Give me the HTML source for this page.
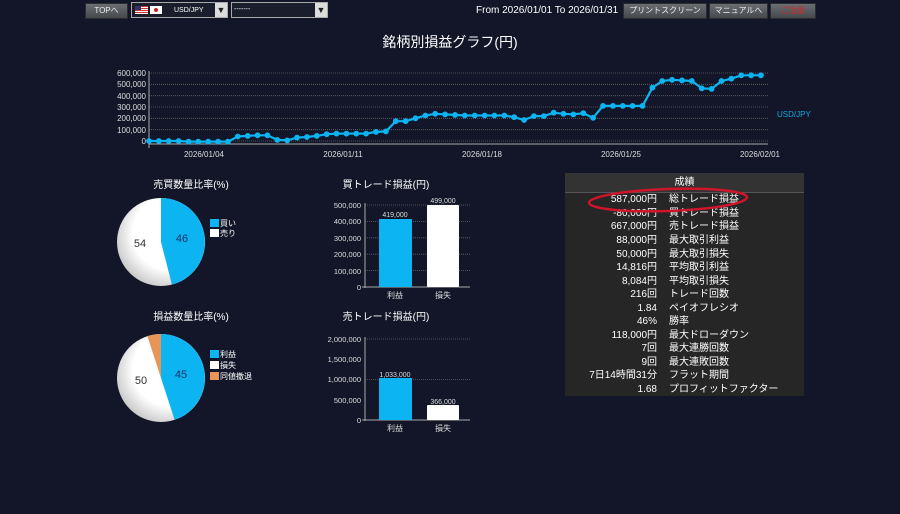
<!DOCTYPE html><html><head><meta charset="utf-8"><style>
body{margin:0;width:900px;height:514px;background:#121628;overflow:hidden;font-family:"Liberation Sans","Noto Sans CJK JP",sans-serif;color:#fff;position:relative}
.b{position:absolute;top:3px;height:14px;background:linear-gradient(#6a6d72,#45484d);border:1px solid #2a2c30;font-size:8px;line-height:14px;text-align:center;color:#eee}
.s{position:absolute;top:2px;height:14px;border:1px solid #aaa;background:#1a1e2c;font-size:7px;line-height:14px}
.s i{position:absolute;right:0;top:0;width:12px;height:14px;background:#ddd;color:#222;font-style:normal;text-align:center;font-size:9px}
table{position:absolute;left:565px;top:173px;width:239px;height:223px;background:#262626;border-collapse:collapse;font-size:10px}
td{padding:0;height:13.4px;line-height:13px}
td.v{text-align:right;width:92px;padding-right:4px}
td.l{padding-left:8px}
</style></head><body>
<div class="b" style="left:85px;width:41px">TOPへ</div>
<div class="s" style="left:131px;width:95px"><span style="position:absolute;left:3px;top:3px;width:13px;height:8px;background:repeating-linear-gradient(#c33 0 1px,#fff 1px 2px)"><span style="position:absolute;left:0;top:0;width:6px;height:4px;background:#336"></span></span><span style="position:absolute;left:18px;top:3px;width:12px;height:8px;background:#fff"><span style="position:absolute;left:4px;top:2px;width:4px;height:4px;border-radius:50%;background:#c22"></span></span><span style="position:absolute;left:42px;top:1px">USD/JPY</span><i>▼</i></div>
<div class="s" style="left:231px;width:95px"><span style="padding-left:2px">-------</span><i>▼</i></div>
<div style="position:absolute;left:476px;top:5px;font-size:10px">From 2026/01/01 To 2026/01/31</div>
<div class="b" style="left:623px;width:82px">プリントスクリーン</div>
<div class="b" style="left:709px;width:57px">マニュアルへ</div>
<div class="b" style="left:770px;width:44px;color:#d22">ご注意</div>
<div style="position:absolute;left:0;width:900px;top:32px;text-align:center;font-size:14px">銘柄別損益グラフ(円)</div>
<svg width="900" height="514" style="position:absolute;left:0;top:0" font-family="Liberation Sans,Noto Sans CJK JP,sans-serif">
<g stroke="#666" stroke-dasharray="1,1" stroke-width="0.8">
<line x1="149" x2="768" y1="73" y2="73"/><line x1="149" x2="768" y1="84.3" y2="84.3"/><line x1="149" x2="768" y1="95.7" y2="95.7"/><line x1="149" x2="768" y1="107" y2="107"/><line x1="149" x2="768" y1="118.3" y2="118.3"/><line x1="149" x2="768" y1="129.7" y2="129.7"/><line x1="149" x2="768" y1="141" y2="141"/>
</g>
<line x1="149" x2="149" y1="71" y2="148" stroke="#aaa"/><line x1="149" x2="768" y1="144" y2="144" stroke="#aaa"/>
<g fill="#ddd" font-size="8" text-anchor="end"><text x="146" y="76">600,000</text><text x="146" y="87">500,000</text><text x="146" y="99">400,000</text><text x="146" y="110">300,000</text><text x="146" y="121">200,000</text><text x="146" y="133">100,000</text><text x="146" y="144">0</text></g>
<g fill="#ddd" font-size="8" text-anchor="middle"><text x="204" y="157">2026/01/04</text><text x="343" y="157">2026/01/11</text><text x="482" y="157">2026/01/18</text><text x="621" y="157">2026/01/25</text><text x="760" y="157">2026/02/01</text></g>
<text x="777" y="117" fill="#1aa7e0" font-size="8">USD/JPY</text>
<g id="ln"></g>
<text x="191" y="188" fill="#fff" font-size="10" text-anchor="middle">売買数量比率(%)</text>
<defs><radialGradient id="wg" cx="0.6" cy="0.4" r="0.7"><stop offset="0.6" stop-color="#fff"/><stop offset="1" stop-color="#bbb"/></radialGradient></defs>
<circle cx="161" cy="242" r="44" fill="url(#wg)"/>
<path d="M161 242 L161 198 A44 44 0 0 1 171.9 284.6 Z" fill="#0db4f2"/>
<text x="182" y="242" fill="#136" font-size="11" text-anchor="middle">46</text><text x="140" y="247" fill="#333" font-size="11" text-anchor="middle">54</text>
<rect x="210" y="219" width="9" height="8" fill="#0db4f2"/><rect x="210" y="229" width="9" height="8" fill="#fff"/>
<text x="220" y="226" fill="#fff" font-size="8">買い</text><text x="220" y="236" fill="#fff" font-size="8">売り</text>
<text x="191" y="320" fill="#fff" font-size="10" text-anchor="middle">損益数量比率(%)</text>
<circle cx="161" cy="378" r="44" fill="url(#wg)"/>
<path d="M161 378 L161 334 A44 44 0 0 1 174.6 419.8 Z" fill="#0db4f2"/>
<path d="M161 378 L147.4 336.2 A44 44 0 0 1 161 334 Z" fill="#e8955a"/>
<text x="181" y="378" fill="#136" font-size="11" text-anchor="middle">45</text><text x="141" y="384" fill="#333" font-size="11" text-anchor="middle">50</text>
<rect x="210" y="350" width="9" height="8" fill="#0db4f2"/><rect x="210" y="361" width="9" height="8" fill="#fff"/><rect x="210" y="372" width="9" height="8" fill="#e8955a"/>
<text x="220" y="357" fill="#fff" font-size="8">利益</text><text x="220" y="368" fill="#fff" font-size="8">損失</text><text x="220" y="379" fill="#fff" font-size="8">同値撤退</text>
<text x="386" y="188" fill="#fff" font-size="10" text-anchor="middle">買トレード損益(円)</text>
<g stroke="#666" stroke-dasharray="1,1" stroke-width="0.8"><line x1="365" x2="470" y1="205" y2="205"/><line x1="365" x2="470" y1="221.4" y2="221.4"/><line x1="365" x2="470" y1="237.8" y2="237.8"/><line x1="365" x2="470" y1="254.2" y2="254.2"/><line x1="365" x2="470" y1="270.6" y2="270.6"/></g>
<line x1="365" x2="365" y1="203" y2="288" stroke="#aaa"/><line x1="362" x2="470" y1="287" y2="287" stroke="#aaa"/>
<g fill="#ddd" font-size="7.5" text-anchor="end"><text x="361" y="208">500,000</text><text x="361" y="224">400,000</text><text x="361" y="241">300,000</text><text x="361" y="257">200,000</text><text x="361" y="274">100,000</text><text x="361" y="290">0</text></g>
<rect x="379" y="219" width="33" height="68" fill="#0db4f2"/><rect x="427" y="205" width="32" height="82" rx="1" fill="#fff"/>
<g fill="#ddd" font-size="7" text-anchor="middle"><text x="395" y="217">419,000</text><text x="443" y="203">499,000</text></g>
<g fill="#ddd" font-size="8" text-anchor="middle"><text x="395" y="298">利益</text><text x="443" y="298">損失</text></g>
<text x="386" y="320" fill="#fff" font-size="10" text-anchor="middle">売トレード損益(円)</text>
<g stroke="#666" stroke-dasharray="1,1" stroke-width="0.8"><line x1="365" x2="470" y1="339" y2="339"/><line x1="365" x2="470" y1="379.5" y2="379.5"/></g>
<line x1="365" x2="365" y1="337" y2="421" stroke="#aaa"/><line x1="362" x2="470" y1="420" y2="420" stroke="#aaa"/>
<g fill="#ddd" font-size="7.5" text-anchor="end"><text x="361" y="342">2,000,000</text><text x="361" y="362">1,500,000</text><text x="361" y="382">1,000,000</text><text x="361" y="403">500,000</text><text x="361" y="423">0</text></g>
<rect x="379" y="378" width="33" height="42" fill="#0db4f2"/><rect x="427" y="405" width="32" height="15" rx="1" fill="#fff"/>
<g fill="#ddd" font-size="7" text-anchor="middle"><text x="395" y="377">1,033,000</text><text x="443" y="404">366,000</text></g>
<g fill="#ddd" font-size="8" text-anchor="middle"><text x="395" y="431">利益</text><text x="443" y="431">損失</text></g>
</svg>
<table>
<tr style="background:#333;border-bottom:1px solid #555"><td colspan="2" style="text-align:center;height:19px">成績</td></tr>
<tr><td class="v">587,000円</td><td class="l">総トレード損益</td></tr>
<tr><td class="v">-80,000円</td><td class="l">買トレード損益</td></tr>
<tr><td class="v">667,000円</td><td class="l">売トレード損益</td></tr>
<tr><td class="v">88,000円</td><td class="l">最大取引利益</td></tr>
<tr><td class="v">50,000円</td><td class="l">最大取引損失</td></tr>
<tr><td class="v">14,816円</td><td class="l">平均取引利益</td></tr>
<tr><td class="v">8,084円</td><td class="l">平均取引損失</td></tr>
<tr><td class="v">216回</td><td class="l">トレード回数</td></tr>
<tr><td class="v">1.84</td><td class="l">ペイオフレシオ</td></tr>
<tr><td class="v">46%</td><td class="l">勝率</td></tr>
<tr><td class="v">118,000円</td><td class="l">最大ドローダウン</td></tr>
<tr><td class="v">7回</td><td class="l">最大連勝回数</td></tr>
<tr><td class="v">9回</td><td class="l">最大連敗回数</td></tr>
<tr><td class="v">7日14時間31分</td><td class="l">フラット期間</td></tr>
<tr><td class="v">1.68</td><td class="l">プロフィットファクター</td></tr>
</table>
<svg width="900" height="514" style="position:absolute;left:0;top:0;pointer-events:none"><ellipse cx="668" cy="200" rx="79" ry="11" fill="none" stroke="#d0142a" stroke-width="2.5" transform="rotate(-2 668 200)"/></svg>
<script>
var v=[0,0,0,0,-5,-5,-5,-5,-5,40,45,50,50,10,5,30,35,45,60,65,65,65,65,80,85,175,175,200,225,240,235,230,225,225,225,225,225,210,185,220,220,250,240,235,245,205,310,310,310,310,310,470,530,540,535,530,465,460,530,550,580,580,580];
var s='',p=[];for(var i=0;i<v.length;i++){var x=149+i*9.87,y=141-v[i]*0.1133;p.push(x.toFixed(1)+','+y.toFixed(1));s+='<circle cx="'+x.toFixed(1)+'" cy="'+y.toFixed(1)+'" r="2.9" fill="#0db4f2"/>';}
document.getElementById('ln').innerHTML='<polyline points="'+p.join(' ')+'" fill="none" stroke="#0db4f2" stroke-width="2.2"/>'+s;
</script>
</body></html>
